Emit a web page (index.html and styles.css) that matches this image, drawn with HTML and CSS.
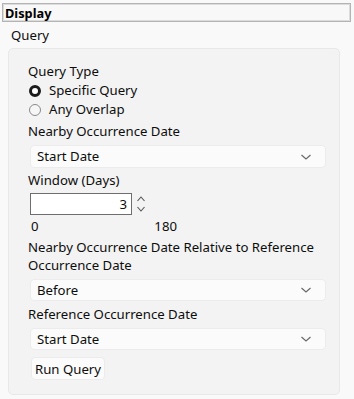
FILE: index.html
```html
<!DOCTYPE html>
<html lang="en">
<head>
    <meta charset="UTF-8">
    <title>Display</title>
    <link rel="stylesheet" href="styles.css">
</head>
<body>
    <div class="display-head">Display</div>
    <div class="section-title">Query</div>
    <div class="panel">
        <div class="label">Query Type</div>
        <label class="radio"><span class="dot on"></span>Specific Query</label>
        <label class="radio"><span class="dot"></span>Any Overlap</label>

        <div class="label gap-3">Nearby Occurrence Date</div>
        <div class="select sel-1">
            <span>Start Date</span>
            <svg class="chev" width="12" height="8" viewBox="0 0 12 8"><path d="M1.5 2 L6 6 L10.5 2" fill="none" stroke="#6a6a6a" stroke-width="1.2"/></svg>
        </div>

        <div class="label gap-3">Window (Days)</div>
        <div class="spin-row">
            <div class="num-input">3</div>
            <div class="spin">
                <svg width="10" height="20" viewBox="0 0 10 20"><path d="M1.5 7 L5 3 L8.5 7" fill="none" stroke="#555" stroke-width="1.1"/><path d="M1.5 13 L5 17 L8.5 13" fill="none" stroke="#555" stroke-width="1.1"/></svg>
            </div>
        </div>
        <div class="range"><span>0</span><span>180</span></div>

        <div class="label two-line">Nearby Occurrence Date Relative to Reference Occurrence Date</div>
        <div class="select sel-2">
            <span>Before</span>
            <svg class="chev" width="12" height="8" viewBox="0 0 12 8"><path d="M1.5 2 L6 6 L10.5 2" fill="none" stroke="#6a6a6a" stroke-width="1.2"/></svg>
        </div>

        <div class="label gap-4">Reference Occurrence Date</div>
        <div class="select sel-3">
            <span>Start Date</span>
            <svg class="chev" width="12" height="8" viewBox="0 0 12 8"><path d="M1.5 2 L6 6 L10.5 2" fill="none" stroke="#6a6a6a" stroke-width="1.2"/></svg>
        </div>

        <button class="run-btn">Run Query</button>
    </div>
</body>
</html>
```

FILE: styles.css
```css
body {
    margin: 0;
    background-color: #f9f9f9;
    font-family: "Noto Sans", "Open Sans", sans-serif;
    font-size: 13.2px;
    color: #0d0d0d;
    line-height: 19px;
}
.display-head {
    margin: 3px 3px 0 2px;
    height: 17px;
    padding: 0 2px;
    border: 1px solid #b4b4b4;
    box-shadow: inset 0 0 0 1px #dcdcdc;
    background-color: #f8f8f8;
    font-size: 12.8px;
    font-weight: bold;
    line-height: 18px;
    color: #000;
}
.section-title {
    margin: 4px 0 0 11px;
    height: 22px;
    line-height: 19px;
}
.panel {
    margin-left: 8px;
    width: 311px;
    height: 332px;
    padding: 13px 0 0 19px;
    background-color: #f3f3f3;
    border: 1px solid #e8e8e8;
    border-radius: 5px;
}
.label {
    height: 19px;
}
.gap-3 {
    margin-top: 3px;
}
.gap-4 {
    margin-top: 4px;
}
.two-line {
    height: 36px;
    line-height: 18px;
    margin-top: 2px;
    width: 300px;
}
.radio {
    display: flex;
    align-items: center;
    height: 19px;
    padding-left: 1px;
}
.dot {
    box-sizing: border-box;
    width: 12px;
    height: 12px;
    margin-right: 8px;
    border-radius: 50%;
    border: 1px solid #8a8a8a;
    background-color: #f6f6f6;
}
.dot.on {
    border: 3px solid #1b1b1b;
    background-color: #fff;
}
.select {
    display: flex;
    justify-content: space-between;
    align-items: center;
    box-sizing: border-box;
    width: 296px;
    height: 23px;
    margin-left: 2px;
    padding: 0 13px 0 6px;
    background-color: #fbfbfb;
    border: 1px solid #ececec;
    border-radius: 4px;
}
.sel-1 {
    margin-top: 4px;
}
.sel-2 {
    margin-top: 5px;
    height: 22px;
}
.sel-3 {
    margin-top: 4px;
    height: 22px;
}
.spin-row {
    display: flex;
    align-items: center;
    margin-top: 3px;
    margin-left: 2px;
}
.num-input {
    box-sizing: border-box;
    width: 102px;
    height: 22px;
    padding-right: 4px;
    text-align: right;
    background-color: #fff;
    border: 1px solid #6e6e6e;
    line-height: 20px;
}
.spin {
    display: flex;
    margin-left: 4px;
}
.range {
    display: flex;
    width: 146px;
    justify-content: space-between;
    margin: 2px 0 0 3px;
}
.run-btn {
    display: block;
    margin: 7px 0 0 3px;
    height: 23px;
    padding: 0 3px;
    font-family: inherit;
    font-size: 13.2px;
    color: #0d0d0d;
    background-color: #fbfbfb;
    border: 1px solid #ececec;
    border-radius: 4px;
}
```
